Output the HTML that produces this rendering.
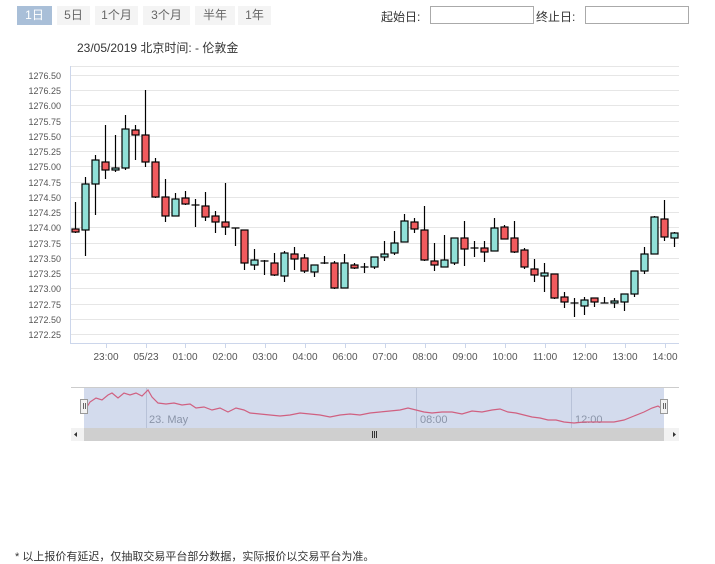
<!DOCTYPE html>
<html><head><meta charset="utf-8"><style>
body{margin:0;width:715px;height:564px;background:#fff;font-family:"Liberation Sans","Noto Sans CJK SC",sans-serif;position:relative;overflow:hidden}
.b{position:absolute;top:6px;height:19px;line-height:19px;font-size:12px;color:#666;background:#f4f4f4;text-align:center}
.t{position:absolute;font-size:12px;color:#333}
.in{position:absolute;top:6px;height:18px;border:1px solid #aaa;background:#fff;box-sizing:border-box}
</style></head><body>
<div class="b" style="left:17px;width:35px;background:#a9bfd8;color:#fff">1日</div>
<div class="b" style="left:57px;width:33px">5日</div>
<div class="b" style="left:95px;width:43px">1个月</div>
<div class="b" style="left:143px;width:47px">3个月</div>
<div class="b" style="left:195px;width:40px">半年</div>
<div class="b" style="left:238px;width:33px">1年</div>
<div class="t" style="left:381px;top:8px">起始日:</div>
<div class="in" style="left:430px;width:104px"></div>
<div class="t" style="left:536px;top:8px">终止日:</div>
<div class="in" style="left:585px;width:104px"></div>
<div class="t" style="left:77px;top:39px">23/05/2019 北京时间: - 伦敦金</div>
<svg width="715" height="564" style="position:absolute;left:0;top:0" font-family="Liberation Sans,sans-serif">
<g stroke="#e6e6e6" stroke-width="1">
<path d="M70 66.5H679M70 75.5H679M70 90.5H679M70 105.5H679M70 121.5H679M70 136.5H679M70 151.5H679M70 166.5H679M70 182.5H679M70 197.5H679M70 212.5H679M70 227.5H679M70 243.5H679M70 258.5H679M70 273.5H679M70 288.5H679M70 304.5H679M70 319.5H679M70 334.5H679"/>
</g>
<path d="M70.5 66V343M70 343.5H679" stroke="#ccd6eb"/>
<path d="M106.5 343v5M146.5 343v5M185.5 343v5M225.5 343v5M265.5 343v5M305.5 343v5M345.5 343v5M385.5 343v5M425.5 343v5M465.5 343v5M505.5 343v5M545.5 343v5M585.5 343v5M625.5 343v5M665.5 343v5" stroke="#ccd6eb"/>
<g font-size="9" fill="#555" text-anchor="end">
<text x="61" y="79">1276.50</text><text x="61" y="94">1276.25</text><text x="61" y="109">1276.00</text><text x="61" y="125">1275.75</text><text x="61" y="140">1275.50</text><text x="61" y="155">1275.25</text><text x="61" y="170">1275.00</text><text x="61" y="186">1274.75</text><text x="61" y="201">1274.50</text><text x="61" y="216">1274.25</text><text x="61" y="231">1274.00</text><text x="61" y="247">1273.75</text><text x="61" y="262">1273.50</text><text x="61" y="277">1273.25</text><text x="61" y="292">1273.00</text><text x="61" y="308">1272.75</text><text x="61" y="323">1272.50</text><text x="61" y="338">1272.25</text>
</g>
<g font-size="10" fill="#555" text-anchor="middle">
<text x="106" y="360">23:00</text><text x="146" y="360">05/23</text><text x="185" y="360">01:00</text><text x="225" y="360">02:00</text><text x="265" y="360">03:00</text><text x="305" y="360">04:00</text><text x="345" y="360">06:00</text><text x="385" y="360">07:00</text><text x="425" y="360">08:00</text><text x="465" y="360">09:00</text><text x="505" y="360">10:00</text><text x="545" y="360">11:00</text><text x="585" y="360">12:00</text><text x="625" y="360">13:00</text><text x="665" y="360">14:00</text>
</g>
<g stroke="#000" stroke-width="1.2">
<path d="M75.5 202V233M85.5 177V256M95.5 155V215M105.5 125V179M115.5 135V172M125.5 115V170M135.5 125V160M145.5 90V167M155.5 158V198M165.5 179V222M175.5 193V216M185.5 191V205M195.5 199V227M205.5 192V221M215.5 211V233M225.5 183V235M235.5 228V246M244.5 230V270M254.5 249V270M264.5 260V275M274.5 253V276M284.5 251V282M294.5 247V270M304.5 254V273M314.5 265V277M324.5 256V264M334.5 261V289M344.5 254V288M354.5 263V269M364.5 263V273M374.5 257V269M384.5 241V261M394.5 231V255M404.5 214V242M414.5 218V233M424.5 206V261M434.5 243V271M444.5 235V267M454.5 238V265M464.5 221V266M474.5 241V257M484.5 241V262M494.5 218V251M504.5 225V239M514.5 221V253M524.5 248V269M534.5 259V282M544.5 263V292M554.5 274V299M564.5 292V308M574.5 298V317M584.5 297V315M594.5 298V307M604.5 297V303M614.5 298V308M624.5 294V311M634.5 271V297M644.5 247V274M654.5 216V254M664.5 200V241M674.5 232V247"/>
<path d="M191.5 205H199.5M231.5 228H239.5M260.5 261H268.5M320.5 263H328.5M360.5 267H368.5M470.5 248H478.5M570.5 303H578.5M600.5 303H608.5"/>
</g>
<g stroke="#000" stroke-width="1.2" fill="#f15b5e">
<rect x="72" y="229" width="7" height="3"/><rect x="102" y="162" width="7" height="8"/><rect x="132" y="130" width="7" height="5"/><rect x="142" y="135" width="7" height="27"/><rect x="152" y="162" width="7" height="35"/><rect x="162" y="197" width="7" height="19"/><rect x="182" y="198" width="7" height="6"/><rect x="202" y="206" width="7" height="11"/><rect x="212" y="216" width="7" height="6"/><rect x="222" y="222" width="7" height="5"/><rect x="241" y="230" width="7" height="33"/><rect x="271" y="263" width="7" height="12"/><rect x="291" y="254" width="7" height="5"/><rect x="301" y="258" width="7" height="13"/><rect x="331" y="263" width="7" height="25"/><rect x="351" y="265" width="7" height="3"/><rect x="411" y="222" width="7" height="7"/><rect x="421" y="230" width="7" height="30"/><rect x="431" y="261" width="7" height="4"/><rect x="461" y="238" width="7" height="11"/><rect x="481" y="248" width="7" height="4"/><rect x="501" y="227" width="7" height="12"/><rect x="511" y="238" width="7" height="14"/><rect x="521" y="250" width="7" height="17"/><rect x="531" y="269" width="7" height="6"/><rect x="551" y="274" width="7" height="24"/><rect x="561" y="297" width="7" height="5"/><rect x="591" y="298" width="7" height="4"/><rect x="661" y="219" width="7" height="18"/>
</g>
<g stroke="#000" stroke-width="1.2" fill="#90e0d8">
<rect x="82" y="184" width="7" height="46"/><rect x="92" y="160" width="7" height="24"/><rect x="112" y="168" width="7" height="2"/><rect x="122" y="129" width="7" height="39"/><rect x="172" y="199" width="7" height="17"/><rect x="251" y="260" width="7" height="5"/><rect x="281" y="253" width="7" height="23"/><rect x="311" y="265" width="7" height="7"/><rect x="341" y="263" width="7" height="25"/><rect x="371" y="257" width="7" height="10"/><rect x="381" y="254" width="7" height="3"/><rect x="391" y="243" width="7" height="10"/><rect x="401" y="221" width="7" height="21"/><rect x="441" y="260" width="7" height="7"/><rect x="451" y="238" width="7" height="25"/><rect x="491" y="228" width="7" height="23"/><rect x="541" y="273" width="7" height="3"/><rect x="581" y="300" width="7" height="6"/><rect x="611" y="301" width="7" height="2"/><rect x="621" y="294" width="7" height="8"/><rect x="631" y="271" width="7" height="23"/><rect x="641" y="254" width="7" height="17"/><rect x="651" y="217" width="7" height="37"/><rect x="671" y="233" width="7" height="5"/>
</g>
<!-- navigator -->
<path d="M71 387.5H679" stroke="#ccc"/>
<rect x="84" y="388" width="580" height="40" fill="#d3dbed"/>
<path d="M146.5 388V428M416.5 388V428M571.5 388V428" stroke="#b8c2d8"/>
<g font-size="11" fill="#8a94a8"><text x="149" y="423">23. May</text><text x="420" y="423">08:00</text><text x="575" y="423">12:00</text></g>
<polyline fill="none" stroke="#d06080" stroke-width="1.2" points="84,412 90,402 96,398 102,400 108,395 112,393 118,398 124,393 130,395 136,393 142,396 148,390 152,397 158,403 166,404 174,403 182,405 190,404 196,408 204,407 212,410 220,408 228,412 236,408 244,410 250,413 260,414 270,415 280,416 290,415 300,413 310,414 320,415 330,417 340,415 350,414 360,415 370,413 380,412 390,411 400,410 408,408 416,410 424,412 432,413 442,412 452,412 462,414 472,411 482,412 492,410 500,409 508,412 516,413 524,415 532,417 540,418 548,420 556,420 564,422 574,423 584,422 594,422 604,422 614,422 624,420 634,416 644,412 652,408 658,406 664,410"/>
<rect x="80.5" y="399.5" width="7" height="14" fill="#f2f2f2" stroke="#999"/>
<path d="M83.5 403v6M85.5 403v6" stroke="#666"/>
<rect x="660.5" y="399.5" width="7" height="14" fill="#f2f2f2" stroke="#999"/>
<path d="M663.5 403v6M665.5 403v6" stroke="#666"/>
<rect x="71" y="428" width="608" height="13" fill="#f2f2f2"/>
<rect x="84" y="428" width="580" height="13" fill="#cfcfcf"/>
<path d="M77 432v5l-3-2.5z" fill="#333"/>
<path d="M673 432v5l3-2.5z" fill="#333"/>
<path d="M372.5 431v7M374.5 431v7M376.5 431v7" stroke="#333"/>
</svg>
<div class="t" style="left:15px;top:548px;font-size:11px">* 以上报价有延迟，仅抽取交易平台部分数据，实际报价以交易平台为准。</div>
</body></html>
